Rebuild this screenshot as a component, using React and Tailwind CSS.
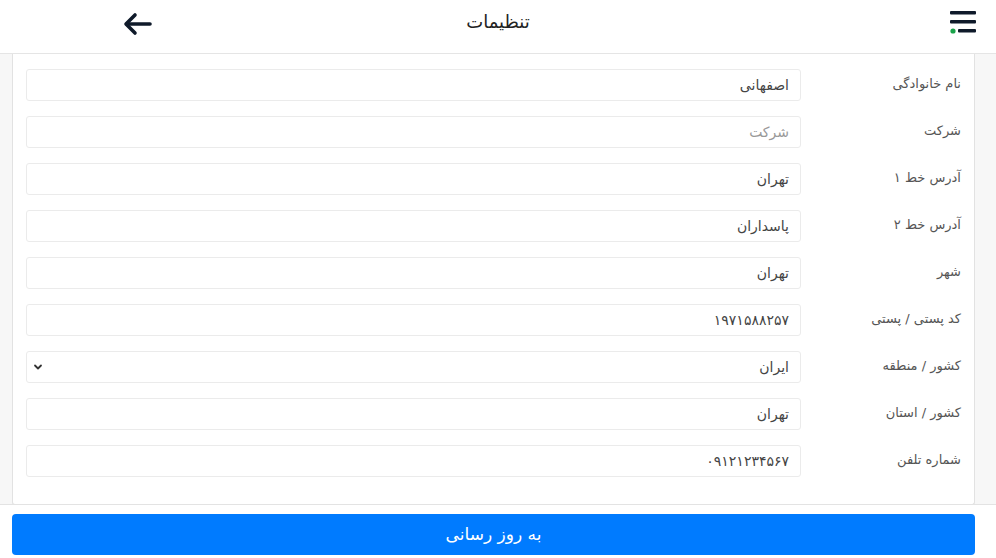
import React from 'react';

const fields = [
  { label: 'نام خانوادگی', value: 'اصفهانی' },
  { label: 'شرکت', value: '', placeholder: 'شرکت' },
  { label: 'آدرس خط ۱', value: 'تهران' },
  { label: 'آدرس خط ۲', value: 'پاسداران' },
  { label: 'شهر', value: 'تهران' },
  { label: 'کد پستی / پستی', value: '۱۹۷۱۵۸۸۲۵۷' },
  { label: 'کشور / منطقه', value: 'ایران', select: true },
  { label: 'کشور / استان', value: 'تهران' },
  { label: 'شماره تلفن', value: '۰۹۱۲۱۲۳۴۵۶۷' },
];

function MenuIcon() {
  return (
    <svg width="28" height="26" viewBox="0 0 28 26" className="block">
      <rect x="2" y="0" width="26" height="3.5" rx="1" fill="#0f1a2a" />
      <rect x="2" y="9" width="26" height="3.5" rx="1" fill="#0f1a2a" />
      <rect x="10" y="18" width="18" height="3.5" rx="1" fill="#0f1a2a" />
      <circle cx="5" cy="20" r="2.6" fill="#1aa34a" />
    </svg>
  );
}

function BackIcon() {
  return (
    <svg width="30" height="24" viewBox="0 0 30 24" fill="none" stroke="#0f1a2a" strokeWidth="3.6" strokeLinecap="round" strokeLinejoin="round" className="block">
      <path d="M27 12H4" />
      <path d="M12 3L3 12l9 9" />
    </svg>
  );
}

export default function App() {
  return (
    <div dir="rtl" className="h-[558px] w-full flex flex-col bg-[#f7f7f7] overflow-hidden" style={{ fontFamily: '"DejaVu Sans", sans-serif' }}>
      <header className="h-[54px] shrink-0 bg-white border-b border-[#e5e5e5] grid grid-cols-3 items-center pb-[6px]">
        <div className="flex justify-start pr-[20px] pt-[1px]">
          <MenuIcon />
        </div>
        <h1 className="text-[18px] text-[#222] text-center pb-[4px]">تنظیمات</h1>
        <div className="flex justify-end pl-[123px]">
          <BackIcon />
        </div>
      </header>

      <main className="flex-1 overflow-hidden pr-[21px] pl-[12px]">
        <div className="bg-white border border-t-0 border-[#e2e2e2] rounded-b-[3px] px-[13px] pt-[15px] pb-[27px] flex flex-col gap-[15px]">
          {fields.map((f) => (
            <div key={f.label} className="flex items-center">
              <label className="w-[160px] shrink-0 text-[13px] text-[#555] pb-[2px]">{f.label}</label>
              <div className="flex-1 h-[32px] border border-[#ebebeb] rounded-[3px] bg-white flex items-center justify-between pr-[11px] pl-[6px]">
                <span className={f.value ? 'text-[14px] text-[#444]' : 'text-[14px] text-[#999]'}>{f.value || f.placeholder}</span>
                {f.select && (
                  <svg width="10" height="8" viewBox="0 0 10 8" fill="none" stroke="#333" strokeWidth="1.8" strokeLinecap="round" strokeLinejoin="round">
                    <path d="M2 2.5l3 3 3-3" />
                  </svg>
                )}
              </div>
            </div>
          ))}
        </div>
      </main>

      <footer className="h-[54px] shrink-0 bg-white border-t border-[#e3e3e3] pr-[21px] pl-[12px] pt-[9px]">
        <button className="w-full h-[41px] rounded-[4px] bg-[#007bff] text-white text-[17px] font-medium">به روز رسانی</button>
      </footer>
    </div>
  );
}
